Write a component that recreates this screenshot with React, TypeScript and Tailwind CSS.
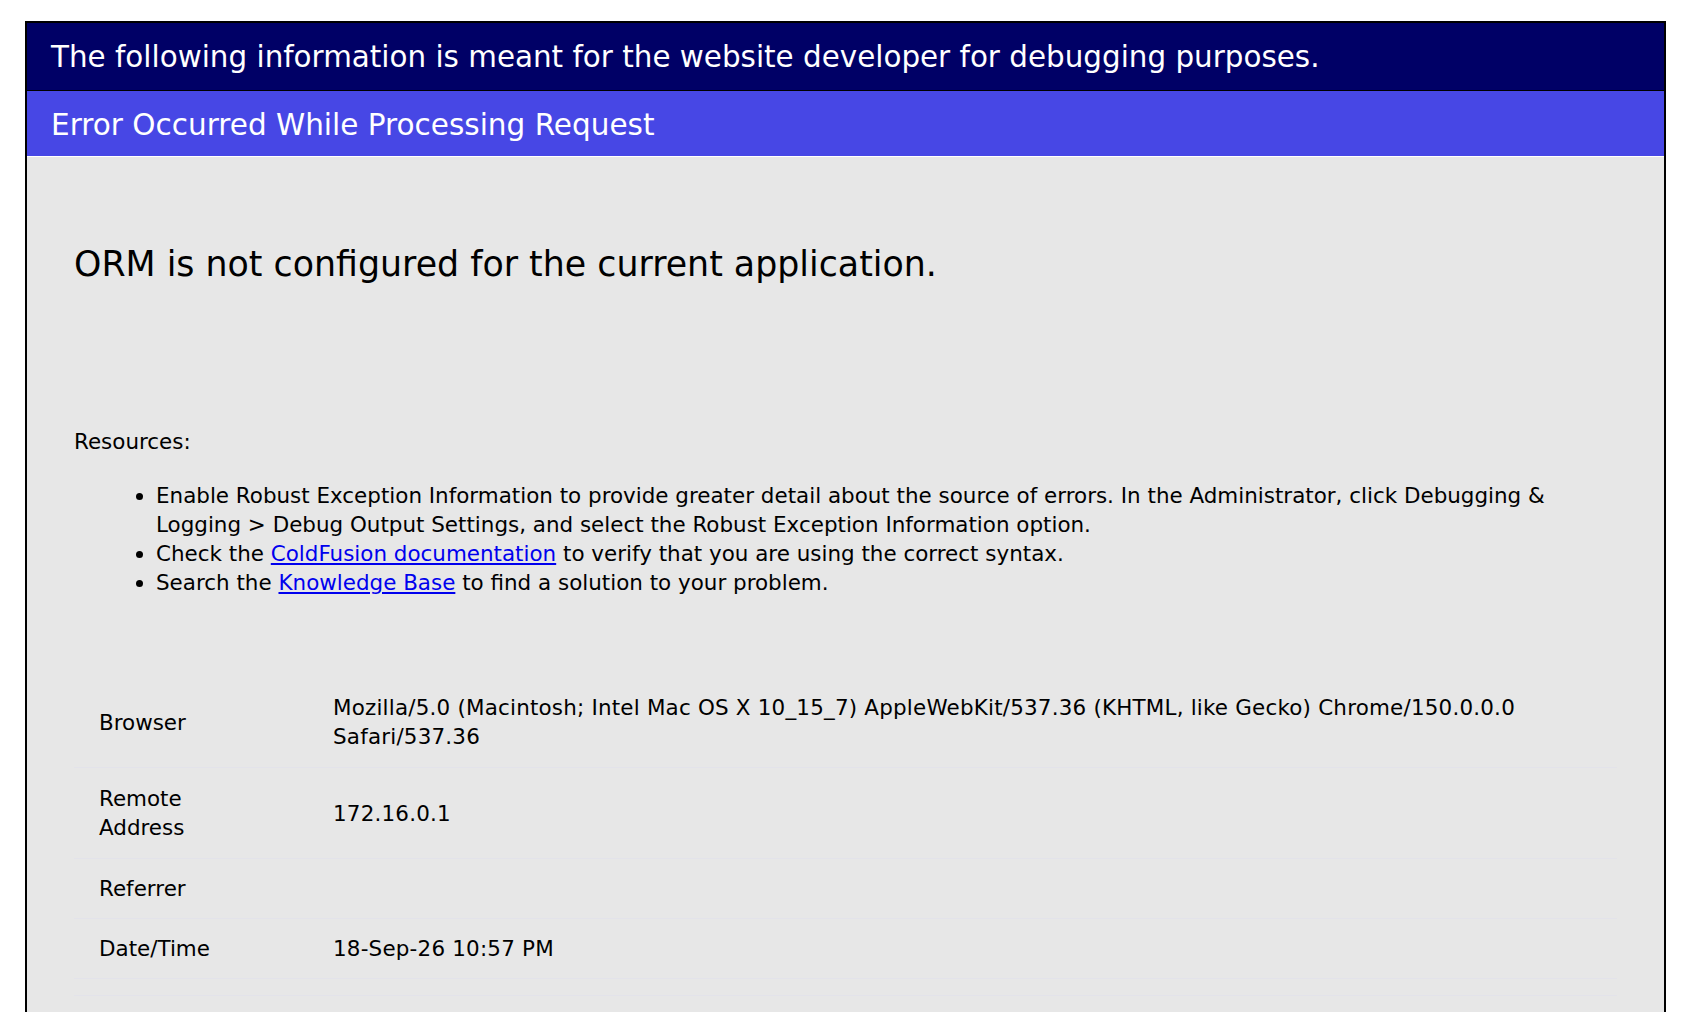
export default function App() {
  const rows: { label: string; value: string; tall: boolean }[] = [
    {
      label: 'Browser',
      value:
        'Mozilla/5.0 (Macintosh; Intel Mac OS X 10_15_7) AppleWebKit/537.36 (KHTML, like Gecko) Chrome/150.0.0.0 Safari/537.36',
      tall: true,
    },
    { label: 'Remote Address', value: '172.16.0.1', tall: true },
    { label: 'Referrer', value: '', tall: false },
    { label: 'Date/Time', value: '18-Sep-26 10:57 PM', tall: false },
  ];

  return (
    <div className="min-h-[1034px] bg-white pt-[21px] font-['DejaVu_Sans',Verdana,sans-serif]">
      <div className="ml-[25px] w-[1641px] border-x-2 border-t-2 border-black">
        {/* Header bars */}
        <div className="flex h-[68px] items-center border-b border-black bg-[#000066] pt-[2px] pl-[24px] text-[29.4px] text-white">
          The following information is meant for the website developer for debugging purposes.
        </div>
        <div className="flex h-[66px] items-center border-b border-white bg-[#4747e5] pt-[4px] pl-[24px] text-[29.5px] text-white">
          Error Occurred While Processing Request
        </div>

        {/* Body */}
        <div className="bg-[#e7e7e7] pl-[47px] pr-[47px] pb-[16px] text-black">
          <h1 className="pt-[87px] text-[34.8px] leading-[40px]">ORM is not configured for the current application.</h1>

          <p className="mt-[143px] text-[21.45px] leading-[29px]">Resources:</p>
          <ul className="mt-[25px] list-disc pl-[82px] text-[21.45px] leading-[29px]">
            <li>
              Enable Robust Exception Information to provide greater detail about the source of errors. In the
              Administrator, click Debugging &amp; Logging &gt; Debug Output Settings, and select the Robust Exception
              Information option.
            </li>
            <li>
              Check the{' '}
              <a href="#" className="text-[#0000ee] underline">
                ColdFusion documentation
              </a>{' '}
              to verify that you are using the correct syntax.
            </li>
            <li>
              Search the{' '}
              <a href="#" className="text-[#0000ee] underline">
                Knowledge Base
              </a>{' '}
              to find a solution to your problem.
            </li>
          </ul>

          <div className="mt-[80px] border-b border-[#e3e3ea] pb-[16px] text-[21.45px] leading-[29px]">
            {rows.map((r) => (
              <div
                key={r.label}
                className={`grid grid-cols-[259px_1fr] border-b border-[#e3e3ea] ${r.tall ? 'py-[16px]' : 'py-[15px]'}`}
              >
                <div className="flex items-center pl-[25px] pr-[80px]">{r.label}</div>
                <div className="flex items-center tracking-[0.2px]">{r.value}</div>
              </div>
            ))}
          </div>
        </div>
      </div>
    </div>
  );
}
